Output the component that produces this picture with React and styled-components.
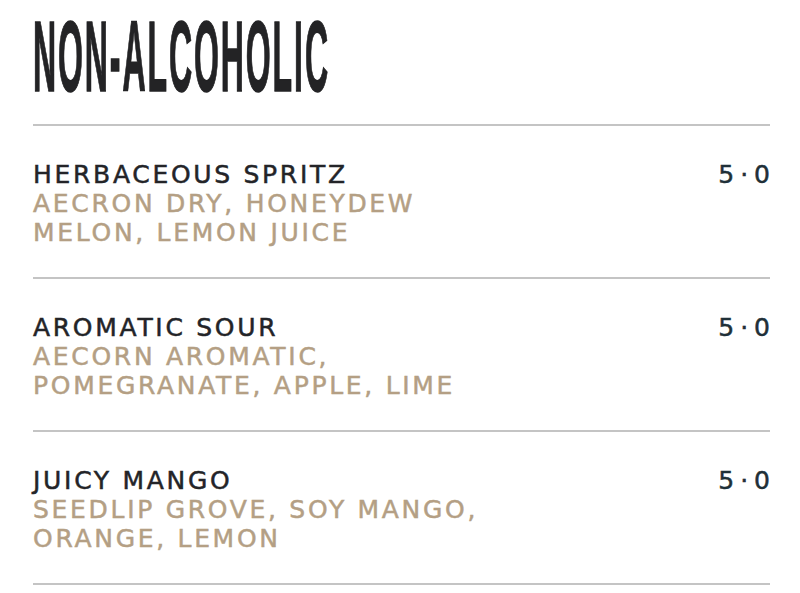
import React from "react";
import styled, { createGlobalStyle } from "styled-components";

const GlobalStyle = createGlobalStyle`
  html, body {
    margin: 0;
    padding: 0;
    background: #ffffff;
  }
`;

const Page = styled.div`
  width: 800px;
  height: 593px;
  overflow: hidden;
  padding: 0 30px 0 33px;
  box-sizing: border-box;
  font-family: "DejaVu Sans", "Liberation Sans", sans-serif;
`;

const Heading = styled.h1`
  margin: 0;
  padding-top: 6px;
  height: 124px;
  box-sizing: border-box;
  font-family: "Liberation Sans Narrow", "Liberation Sans", sans-serif;
  font-weight: 700;
  font-size: 100px;
  line-height: 100px;
  color: #232325;
  white-space: nowrap;
  transform: scaleX(0.32);
  transform-origin: left top;
  letter-spacing: 6px;
  -webkit-text-stroke: 1.5px #232325;
`;

const List = styled.div`
  border-top: 2px solid #c4c4c4;
`;

const Item = styled.div`
  display: flex;
  justify-content: space-between;
  align-items: flex-start;
  height: 153px;
  padding-top: 34px;
  box-sizing: border-box;
  border-bottom: 2px solid #c4c4c4;
`;

const Info = styled.div`
  display: flex;
  flex-direction: column;
`;

const Text = styled.div`
  font-size: 25px;
  line-height: 29px;
  letter-spacing: 2.7px;
  -webkit-text-stroke: 0.5px currentColor;
  white-space: nowrap;
`;

const Name = styled(Text)`
  color: #232428;
`;

const Ingredients = styled(Text)`
  color: #b49f84;
`;

const Price = styled(Text)`
  color: #1f3038;
  letter-spacing: 6px;
  margin-right: -6px;
`;

const drinks = [
  {
    name: "HERBACEOUS SPRITZ",
    lines: ["AECRON DRY, HONEYDEW", "MELON, LEMON JUICE"],
  },
  {
    name: "AROMATIC SOUR",
    lines: ["AECORN AROMATIC,", "POMEGRANATE, APPLE, LIME"],
  },
  {
    name: "JUICY MANGO",
    lines: ["SEEDLIP GROVE, SOY MANGO,", "ORANGE, LEMON"],
  },
];

const App = () => {
  return (
    <>
      <GlobalStyle />
      <Page>
        <Heading>NON-ALCOHOLIC</Heading>
        <List>
          {drinks.map((d) => (
            <Item key={d.name}>
              <Info>
                <Name>{d.name}</Name>
                {d.lines.map((l) => (
                  <Ingredients key={l}>{l}</Ingredients>
                ))}
              </Info>
              <Price>5·0</Price>
            </Item>
          ))}
        </List>
      </Page>
    </>
  );
};

export default App;
